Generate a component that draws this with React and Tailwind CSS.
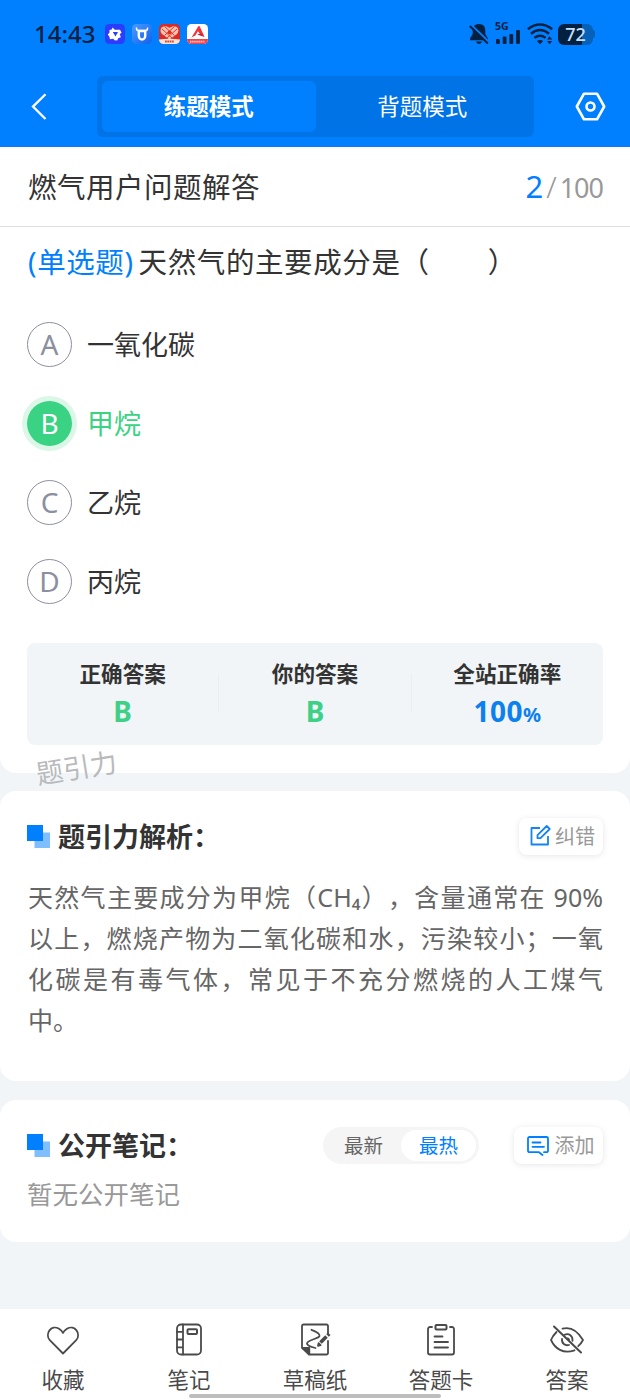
const options = [
  { key: "A", label: "一氧化碳" },
  { key: "B", label: "甲烷", correct: true },
  { key: "C", label: "乙烷" },
  { key: "D", label: "丙烷" },
];

const explanationLines = [
  "天然气主要成分为甲烷（CH₄），含量通常在 90%",
  "以上，燃烧产物为二氧化碳和水，污染较小；一氧",
  "化碳是有毒气体，常见于不充分燃烧的人工煤气",
];

function StatusBar() {
  return (
    <div className="flex h-[68px] items-center pl-[34px] pr-[35px] text-[#04203f]">
      <span className="w-[71px] text-[24px] leading-[30px] font-medium">14:43</span>
      <div className="flex gap-[7px]">
        <svg width="20" height="20" viewBox="0 0 20 20">
          <rect width="20" height="20" rx="4.5" fill="#2b3cff" />
          <path d="M7.600 3.400l2.200 2.400h5.200l1.600 3-1.800 1.200 1 3.200-2.600 1-1 2.400-2.800-.4-1-1.400-3.400.4-.6-2.400-1.600-2.200 1.800-2-.2-2.600 2.400-.4z" fill="#fff" />
          <path d="M7.800 8h5.200l-2.500 4.600z" fill="#2b3cff" />
        </svg>
        <svg width="20" height="20" viewBox="0 0 20 20">
          <defs>
            <linearGradient id="ox" x1="0" y1="0" x2="1" y2="1">
              <stop offset="0" stopColor="#4a9cff" />
              <stop offset="1" stopColor="#1160ee" />
            </linearGradient>
          </defs>
          <rect width="20" height="20" rx="4.5" fill="url(#ox)" />
          <path d="M4.500 3.500v1.200q0 1.800 2.200 1.800h6.600q2.200 0 2.200-1.800V3.500" fill="none" stroke="#fff" strokeWidth="1.500" />
          <path d="M6.800 7v5a3.200 3.600 0 0 0 6.400 0V7z" fill="none" stroke="#fff" strokeWidth="2.400" />
        </svg>
        <svg width="21" height="20" viewBox="0 0 21 20">
          <rect width="21" height="20" rx="4.500" fill="#de2a25" />
          <path d="M10.500 15.500L3 10C0 6.500 2 1.500 7 2.300l3.500 1.500L14 2.300c5-.8 7 4.200 4 7.700z" fill="#f9c3ad" />
          <path d="M3 5l10 9M5.500 2.500l10 9M18 5l-10 9M15.500 2.500l-10 9" stroke="#de2a25" strokeWidth=".9" />
          <circle cx="10.500" cy="8.300" r="1.900" fill="#de2a25" />
          <path d="M0 15.500q10.500-1.500 21 0a4.500 4.500 0 0 1-4.500 4.500h-12A4.500 4.500 0 0 1 0 15.500z" fill="#fbe3d2" />
          <path d="M6 17.600h9" stroke="#d84a3a" strokeWidth="2" strokeDasharray="1.800 .5" />
        </svg>
        <svg width="21" height="20" viewBox="0 0 21 20">
          <rect width="21" height="20" rx="4.500" fill="#fff" />
          <path d="M4.500 13.500L11.300 2.200q1.200-.8 1.600.5l4.600 10.100-4.200-2.300-2.400-3.200-2.600 4.200z" fill="#f0323c" />
          <path d="M10 10.500l4-1 3.500 3.500z" fill="#c81f32" />
          <path d="M0 15h21v.5a4.500 4.500 0 0 1-4.500 4.500h-12A4.500 4.500 0 0 1 0 15.500z" fill="#f0434b" />
          <path d="M3 17.600h15" stroke="#ffc7c7" strokeWidth="1.600" strokeDasharray="1.500 .6" />
        </svg>
      </div>
      <div className="ml-auto flex items-center">
        <svg width="20" height="22" viewBox="0 0 20 22" fill="currentColor">
          <path d="M10 1c4.300 0 6.300 2.800 6.300 6.500v3.600l2.700 4.400v1.700H1v-1.700l2.700-4.400V7.500C3.700 3.800 5.700 1 10 1zM6.800 18.600h6.400q-1 2.400-3.200 2.400t-3.200-2.400z" />
          <path d="M2.300 2L20 19" stroke="#0080ff" strokeWidth="2" />
          <path d="M.8 3L18.800 20.500" stroke="currentColor" strokeWidth="2" />
        </svg>
        <div className="-mt-[3px] ml-1.5 flex w-[26px] flex-col">
          <span className="h-[9px] text-[10.500px] leading-[9px] font-bold">5G</span>
          <svg className="ml-px overflow-visible" width="25" height="13" viewBox="0 0 25 13" fill="currentColor">
            <rect x="0" y="8" width="3.800" height="5" rx="1" />
            <rect x="6.700" y="5.500" width="3.800" height="7.500" rx="1" />
            <rect x="13.400" y="3" width="3.800" height="10" rx="1" />
            <rect x="20.100" y="-1" width="3.800" height="14" rx="1" />
          </svg>
        </div>
        <svg className="ml-1.5" width="26" height="22" viewBox="0 0 26 22" fill="none" stroke="currentColor" strokeWidth="2.400">
          <path d="M.8 6.200q12.200-9.400 24.400 0M4 10.700q9-7.200 18 0M7.400 14.900q5.600-4.400 11.200 0" />
          <path d="M9.800 18q3.200-1.800 6.400 0L13 21.300zM20 16.500l2.600-3.200 2.600 3.200zM20 18l2.600 3.200 2.600-3.200z" fill="currentColor" stroke="none" />
        </svg>
        <div className="ml-[5px] flex h-[21px] w-[35px] items-center justify-center rounded-[6px] bg-linear-to-r from-[#04203f] from-70% to-[#0662b8] to-70% text-[18px] leading-[20px] font-medium text-[#c4e0ff]">
          72
        </div>
        <span className="h-2 w-[2px] rounded-r bg-[#0662b8]" />
      </div>
    </div>
  );
}

function SectionTitle({ children }) {
  return (
    <div className="flex items-center">
      <svg className="mr-[8px]" width="23" height="23" viewBox="0 0 23 23">
        <rect x="7.500" y="7.500" width="15.500" height="15.500" fill="#80bfff" />
        <rect width="16" height="16" fill="#0080ff" />
      </svg>
      <h2 className="text-[27px] leading-9 font-bold text-[#333]">{children}</h2>
    </div>
  );
}

function Stat({ label, children }) {
  return (
    <div className="flex flex-1 flex-col items-center">
      <span className="text-[21.600px] leading-8 font-bold text-[#333]">{label}</span>
      <span className="mt-[5px] text-[28px] leading-8 font-bold">{children}</span>
    </div>
  );
}

function NavItem({ label, children }) {
  return (
    <div className="flex flex-1 flex-col items-center pt-[13px]">
      <svg width="36" height="36" viewBox="0 0 36 36" fill="none" stroke="#4a4a4a" strokeWidth="1.800" strokeLinejoin="round" strokeLinecap="round">
        {children}
      </svg>
      <span className="mt-[7px] text-[21.500px] leading-[30px] text-[#4a4a4a]">{label}</span>
    </div>
  );
}

export default function App() {
  return (
    <div className="relative flex h-[1400px] w-[630px] flex-col overflow-hidden bg-[#f1f5f8] font-['Noto_Sans','Noto_Sans_CJK_SC',sans-serif] text-[#333]">
      <header className="h-[147px] shrink-0 bg-[#0080ff]">
        <StatusBar />
        <div className="flex items-center pt-2 pl-[29px] pr-[24px]">
          <svg width="20" height="28" viewBox="0 0 20 28" fill="none" stroke="#fff" strokeWidth="2.300">
            <path d="M16.500 1.200L4 13.600 16.500 26" />
          </svg>
          <div className="ml-[48px] flex h-[61px] w-[437px] rounded-md bg-[#0073e6] p-[5px] text-[22.500px] text-white">
            <div className="flex flex-1 items-center justify-center rounded-md bg-[#0080ff] font-bold">练题模式</div>
            <div className="flex flex-1 items-center justify-center">背题模式</div>
          </div>
          <svg className="ml-auto" width="31" height="29" viewBox="0 0 31 29" fill="none" stroke="#fff" strokeWidth="2.600" strokeLinejoin="round">
            <path d="M9 1.700h13l7.200 12.800L22 27.300H9L1.800 14.500z" />
            <circle cx="15.500" cy="14.500" r="4" />
          </svg>
        </div>
      </header>

      <main className="flex flex-1 flex-col">
        <section className="h-[626px] rounded-b-[16px] bg-white">
          <div className="flex h-[80px] items-center justify-between border-b border-[#dcdfe2] px-[27px]">
            <h1 className="pl-px text-[28.500px] leading-10 tracking-[0.500px]">燃气用户问题解答</h1>
            <div className="flex items-baseline">
              <span className="text-[31px] leading-10 text-[#0080ff]">2</span>
              <span className="mr-[3px] ml-[3px] text-[30px] leading-10 font-light text-[#999]">/</span>
              <span className="text-[27px] leading-10 tracking-[-1px] text-[#999]">100</span>
            </div>
          </div>
          <p className="flex items-center px-[28px] pt-[15px] text-[28.500px] leading-10 tracking-[0.600px]">
            <span className="mr-[5px] text-[#0080ff]">(单选题)</span>
            <span className="whitespace-pre">天然气的主要成分是（　　）</span>
          </p>
          <div className="mt-[40px] flex flex-col gap-[34px] px-[27px]">
            {options.map((o) => (
              <div key={o.key} className={`flex h-[45px] items-center ${o.correct ? "text-[#3ad283]" : ""}`}>
                <span
                  className={`mr-[15px] flex size-[45px] items-center justify-center rounded-full pb-[2px] text-[28px] leading-none ${
                    o.correct ? "bg-[#3ad283] text-white ring-[5px] ring-[#dcf7e8]" : "border-[1.500px] border-[#8c8fa0] text-[#8c8fa0]"
                  }`}
                >
                  {o.key}
                </span>
                <span className="text-[27px] leading-10">{o.label}</span>
              </div>
            ))}
          </div>
          <div className="mx-[27px] mt-[39px] flex h-[102px] rounded-lg bg-[#f1f5f8] pt-[15px]">
            <Stat label="正确答案">
              <span className="text-[#3fd088]">B</span>
            </Stat>
            <span className="mt-[16px] h-[38px] w-px bg-[#e9eef3]" />
            <Stat label="你的答案">
              <span className="text-[#3fd088]">B</span>
            </Stat>
            <span className="mt-[16px] h-[38px] w-px bg-[#e9eef3]" />
            <Stat label="全站正确率">
              <span className="text-[#0d80f0]">
                <span className="tracking-[0.500px]">100</span>
                <span className="text-[20px]">%</span>
              </span>
            </Stat>
          </div>
        </section>

        <section className="mt-[18px] h-[290px] rounded-[16px] bg-white px-[27px] pt-[27px]">
          <div className="flex h-[37px] items-center justify-between">
            <SectionTitle>题引力解析：</SectionTitle>
            <button className="flex h-[37px] w-[84px] items-center justify-center gap-1 rounded-lg bg-white pl-[3px] text-[20px] text-[#999] shadow-[0_1px_6px_rgba(0,0,0,0.1)]">
              <svg className="-mt-[2px]" width="21" height="21" viewBox="0 0 21 21" fill="none" stroke="#1484ee" strokeWidth="1.800" strokeLinejoin="round">
                <path d="M10 3H1.500v16.500H18V11" />
                <path d="M7.500 10.200L16.700 1l3 3-9.200 9.200h-3z" />
              </svg>
              纠错
            </button>
          </div>
          <div className="mt-[22px] pl-px text-[25px] leading-[41px] text-[#666] [text-spacing-trim:space-all]">
            {explanationLines.map((line) => (
              <p key={line} className="whitespace-nowrap text-justify [text-align-last:justify]">
                {line}
              </p>
            ))}
            <p>中。</p>
          </div>
        </section>

        <section className="mt-[19px] h-[142px] rounded-[16px] bg-white px-[27px] pt-[27px]">
          <div className="flex h-[37px] items-center">
            <SectionTitle>公开笔记：</SectionTitle>
            <div className="ml-auto flex h-[37px] w-[156px] rounded-full bg-[#f5f5f5] p-[3px] text-[19.500px] text-[#666]">
              <span className="flex flex-1 items-center justify-center">最新</span>
              <span className="flex flex-1 items-center justify-center rounded-full bg-white text-[#0080ff]">最热</span>
            </div>
            <button className="ml-[35px] flex h-[37px] w-[89px] items-center justify-center gap-[6px] rounded-lg bg-white pl-1 text-[20px] text-[#999] shadow-[0_1px_6px_rgba(0,0,0,0.1)]">
              <svg width="22" height="20" viewBox="0 0 22 20" fill="none" stroke="#0080ff" strokeWidth="1.800" strokeLinejoin="round" strokeLinecap="round">
                <path d="M15.500 19l-3.500-2.800H2.500a1.500 1.500 0 0 1-1.500-1.500V2.500A1.500 1.500 0 0 1 2.500 1h17A1.500 1.500 0 0 1 21 2.500v12.200a1.500 1.500 0 0 1-1.500 1.500H17" />
                <path d="M5.500 6.500h8M5.500 10.800h11.500" />
              </svg>
              添加
            </button>
          </div>
          <p className="mt-[12px] text-[25.500px] leading-9 text-[#999]">暂无公开笔记</p>
        </section>
      </main>

      <nav className="flex h-[91px] shrink-0 bg-white">
        <NavItem label="收藏">
          <path d="M18 31.500L4.800 18.200C-.5 12 6.200 2 14 6.800c1.800 1.100 3.300 2.600 4 4.200.7-1.600 2.200-3.100 4-4.200C29.800 2 36.500 12 31.200 18.200z" />
        </NavItem>
        <NavItem label="笔记">
          <rect x="6" y="2.500" width="24" height="30" rx="4" />
          <path d="M12 2.500v30M6 9.800h6M6 17.500h6M6 25.300h6" />
          <rect x="16.500" y="7.300" width="9.500" height="4.700" rx="1" strokeWidth="2" />
        </NavItem>
        <NavItem label="草稿纸">
          <path d="M31 11V4a1.500 1.500 0 0 0-1.500-1.500h-23A1.500 1.500 0 0 0 5 4v21.500l7 7h17.500A1.500 1.500 0 0 0 31 31V19" />
          <path d="M5.300 26h7v6.200z" fill="#4a4a4a" />
          <path d="M14.500 7.800c4 1.500 8.500 4 8 6.200-.8 3-12.500 3.800-12.500 7.500 0 2 4.500 3.500 8.500 4.500" />
          <path d="M23.500 20.500l6-6M30.600 13.400l1.600-1.600" strokeWidth="3.600" strokeLinecap="butt" />
          <path d="M21 23.800l.6-2.600 2 2z" fill="#4a4a4a" />
        </NavItem>
        <NavItem label="答题卡">
          <path d="M9 5H7a2 2 0 0 0-2 2v23.500a2 2 0 0 0 2 2h22a2 2 0 0 0 2-2V7a2 2 0 0 0-2-2h-2" />
          <rect x="12.500" y="3" width="11" height="4.500" rx="1" strokeWidth="2" />
          <path d="M11.500 14.500h8M11.500 20h13.500M11.500 25.500h13.500" />
        </NavItem>
        <NavItem label="答案">
          <path d="M13.500 6.700c9-2.400 15.500 3 20.500 11.300-1.300 2.400-3 4.500-4.800 6.200M25.500 28.300C14 32.500 6 26.500 2 18c1.200-3 3-5.500 5.500-8" />
          <path d="M15.500 12.800c4.500-2 8.500 1 8 6M20 23c-4 1-7.500-1.500-7-6M18.300 16.300c1 0 1.700.7 1.700 1.700" />
          <path d="M5 4.500L32 30.500" strokeWidth="2" />
        </NavItem>
      </nav>

      {/* watermark lies across the edge of the question card */}
      <span className="absolute top-[750px] left-[36px] -rotate-9 text-[27px] leading-9 text-[#b8babc]">题引力</span>
      <span className="absolute top-[1394px] left-[189px] h-1 w-[252px] rounded-full bg-[#bdbdbd]" />
    </div>
  );
}
